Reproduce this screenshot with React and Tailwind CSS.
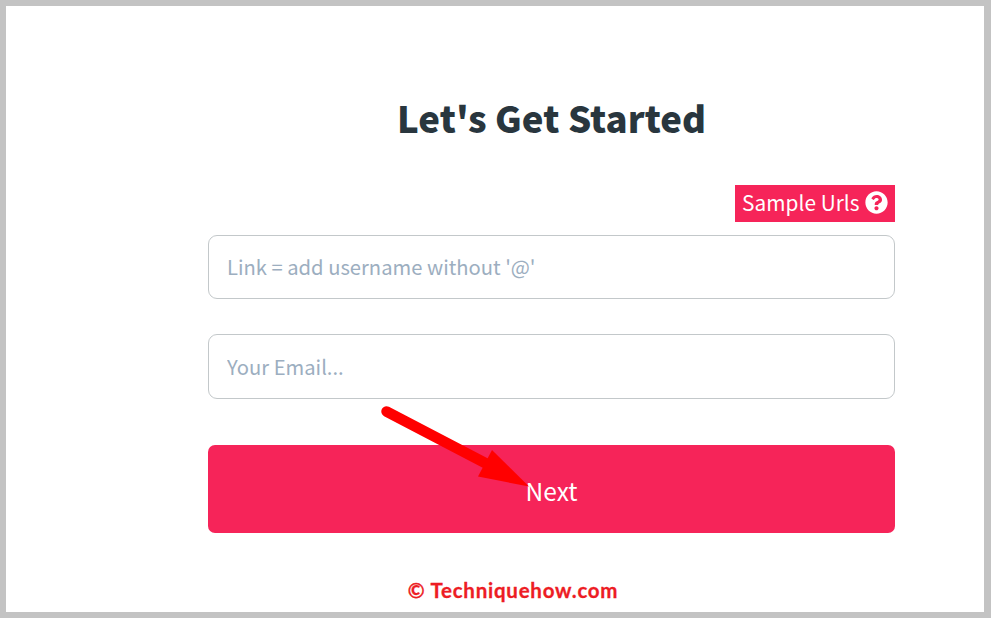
import React from "react";
import { FaQuestionCircle } from "react-icons/fa";

function Field({ placeholder, className }) {
  return (
    <input
      type="text"
      placeholder={placeholder}
      className={`block w-full rounded-[9px] border border-[#c3c8ca] bg-white px-[18px] text-[#2b373f] outline-none placeholder:text-[#9caec0] placeholder:opacity-100 ${className}`}
    />
  );
}

function Arrow() {
  return (
    <svg
      className="pointer-events-none absolute left-[370px] top-[394px]"
      width="160"
      height="100"
      viewBox="376 400 160 100"
      aria-hidden="true"
    >
      <path d="M386.500 411.5L488 464.500" stroke="#ff0000" strokeWidth="10.5" strokeLinecap="round" />
      <path d="M492 450L529 486.500L478 476.500Z" fill="#ff0000" />
    </svg>
  );
}

export default function App() {
  return (
    <div className="h-[618px] w-[991px] overflow-hidden border-[6px] border-r-[7px] border-[#c3c3c3] bg-white font-['Noto_Sans_CJK_SC','Open_Sans',sans-serif]">
      <main className="relative flex h-full flex-col pl-[202px] pr-[89px]">
        <h1 className="mt-[84px] h-[57px] whitespace-nowrap text-center text-[36.5px] font-black leading-[56px] tracking-[0.05px] text-[#29363e]">
          Let's Get Started
        </h1>
        <div className="mt-[38px] flex h-[37px] w-[160px] items-center gap-[5px] self-end whitespace-nowrap bg-[#f62459] pl-[7px] text-[20.8px] leading-[35px] text-white">
          <span className="-mt-[2px] w-[118px] tracking-[0.05px]">Sample Urls</span>
          <FaQuestionCircle className="-mt-[2px] size-[23px] shrink-0" />
        </div>
        <Field placeholder="Link = add username without '@'" className="mt-[13px] h-[64px] pb-[2px] text-[20.2px]" />
        <Field placeholder="Your Email..." className="mt-[35px] h-[65px] text-[20.2px]" />
        <button className="mt-[46px] h-[88px] w-full rounded-[7px] bg-[#f62459] pt-[4px] text-[24.5px] text-white">
          Next
        </button>
        <footer className="mt-[42px] h-[30px] w-[610px] whitespace-nowrap text-center font-['Lato',sans-serif] text-[20.5px] font-bold leading-[30px] tracking-[0.75px] text-[#ed1c24] [-webkit-text-stroke:0.3px_#ed1c24]">
          © Techniquehow.com
        </footer>
        <Arrow />
      </main>
    </div>
  );
}
